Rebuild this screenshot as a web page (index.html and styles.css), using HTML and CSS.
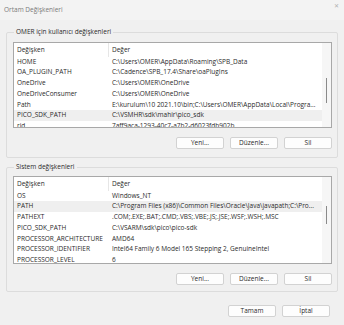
FILE: index.html
```html
<!DOCTYPE html>
<html lang="tr">
<head>
    <meta charset="UTF-8">
    <meta name="viewport" content="width=device-width, initial-scale=1.0">
    <title>Ortam Değişkenleri</title>
    <link rel="stylesheet" href="styles.css">
</head>
<body>
    <div class="window">
        <div class="titlebar">
            <span class="title">Ortam Değişkenleri</span>
            <span class="close">&#x2715;</span>
        </div>
        <div class="content">
            <!-- Kullanıcı değişkenleri -->
            <fieldset class="group group-user">
                <legend>OMER için kullanıcı değişkenleri</legend>
                <div class="list list-user">
                    <div class="rows">
                        <div class="row head">
                            <div class="name">Değişken</div>
                            <div class="value">Değer</div>
                        </div>
                        <div class="row"><div class="name">HOME</div><div class="value">C:\Users\OMER\AppData\Roaming\SPB_Data</div></div>
                        <div class="row"><div class="name">OA_PLUGIN_PATH</div><div class="value">C:\Cadence\SPB_17.4\Share\oaPlugIns</div></div>
                        <div class="row"><div class="name">OneDrive</div><div class="value">C:\Users\OMER\OneDrive</div></div>
                        <div class="row"><div class="name">OneDriveConsumer</div><div class="value">C:\Users\OMER\OneDrive</div></div>
                        <div class="row"><div class="name">Path</div><div class="value">E:\kurulum\10 2021.10\bin;C:\Users\OMER\AppData\Local\Progra...</div></div>
                        <div class="row selected"><div class="name">PICO_SDK_PATH</div><div class="value">C:\VSMHR\sdk\mahir\pico_sdk</div></div>
                        <div class="row"><div class="name">rid</div><div class="value">7aff9aca-1293-40c7-a7b2-d6023fdb902b</div></div>
                    </div>
                    <div class="scrollbar"><div class="thumb"></div></div>
                </div>
                <div class="actions">
                    <button>Yeni...</button>
                    <button>Düzenle...</button>
                    <button>Sil</button>
                </div>
            </fieldset>

            <!-- Sistem değişkenleri -->
            <fieldset class="group group-system">
                <legend>Sistem değişkenleri</legend>
                <div class="list list-system">
                    <div class="rows">
                        <div class="row head">
                            <div class="name">Değişken</div>
                            <div class="value">Değer</div>
                        </div>
                        <div class="row"><div class="name">OS</div><div class="value">Windows_NT</div></div>
                        <div class="row selected"><div class="name">PATH</div><div class="value">C:\Program Files (x86)\Common Files\Oracle\Java\javapath;C:\Pro...</div></div>
                        <div class="row"><div class="name">PATHEXT</div><div class="value">.COM;.EXE;.BAT;.CMD;.VBS;.VBE;.JS;.JSE;.WSF;.WSH;.MSC</div></div>
                        <div class="row"><div class="name">PICO_SDK_PATH</div><div class="value">C:\VSARM\sdk\pico\pico-sdk</div></div>
                        <div class="row"><div class="name">PROCESSOR_ARCHITECTURE</div><div class="value">AMD64</div></div>
                        <div class="row"><div class="name">PROCESSOR_IDENTIFIER</div><div class="value">Intel64 Family 6 Model 165 Stepping 2, GenuineIntel</div></div>
                        <div class="row"><div class="name">PROCESSOR_LEVEL</div><div class="value">6</div></div>
                    </div>
                    <div class="scrollbar"><div class="thumb"></div></div>
                </div>
                <div class="actions">
                    <button>Yeni...</button>
                    <button>Düzenle...</button>
                    <button>Sil</button>
                </div>
            </fieldset>

            <div class="footer">
                <button>Tamam</button>
                <button>İptal</button>
            </div>
        </div>
    </div>
</body>
</html>
```

FILE: styles.css
```css
    body {
        margin: 0;
        padding: 0;
        background-color: #f0f0f0;
        font-family: "Open Sans", "Noto Sans", sans-serif;
        font-size: 6.5px;
        color: #2a2a2a;
    }

    .window {
        width: 344px;
        height: 325px;
        overflow: hidden;
    }

    .titlebar {
        height: 20px;
        display: flex;
        align-items: center;
        justify-content: space-between;
        padding: 0 4px 0 4px;
        background-color: #f3f3f3;
    }

    .title {
        color: #7a7a7a;
        font-size: 6.5px;
        margin-top: -1px;
    }

    .close {
        color: #b0b0b0;
        font-size: 6px;
        margin-top: -8px;
        margin-right: 1px;
    }

    .content {
        padding: 7px 6px 0 6px;
    }

    .group {
        margin: 0;
        padding: 0 5px 0 6px;
        border: 1px solid #dcdcdc;
        border-radius: 2px;
    }

    .group legend {
        padding: 0 2px;
        margin-left: 1px;
        line-height: 10px;
        height: 10px;
    }

    .group-user {
        padding-top: 5px;
        padding-bottom: 8px;
    }

    .group-system {
        margin-top: 4px;
        padding-top: 4px;
        padding-bottom: 6px;
    }

    .list {
        display: flex;
        background-color: #fff;
        border: 1px solid #a8a8a8;
        overflow: hidden;
    }

    .list-user {
        height: 84px;
    }

    .list-system {
        height: 86px;
    }

    .rows {
        flex: 1;
        min-width: 0;
    }

    .row {
        display: flex;
        height: 10.8px;
        line-height: 10.8px;
        white-space: nowrap;
    }

    .row.head {
        height: 13.5px;
        line-height: 13px;
    }

    .row.selected {
        background-color: #efefef;
    }

    .name {
        width: 91px;
        padding-left: 3px;
        flex-shrink: 0;
    }

    .head .name {
        border-right: 1px solid #e6e6e6;
    }

    .value {
        padding-left: 4px;
        overflow: hidden;
        flex: 1;
        min-width: 0;
    }

    .head .value {
        padding-left: 3px;
    }

    .scrollbar {
        width: 9px;
        flex-shrink: 0;
        background-color: #f6f6f6;
        display: flex;
        flex-direction: column;
        align-items: center;
    }

    .thumb {
        width: 1px;
        background-color: #8a8a8a;
    }

    .list-user .thumb {
        margin-top: 35px;
        height: 25px;
    }

    .list-system .thumb {
        margin-top: 29px;
        height: 18px;
    }

    .actions {
        display: flex;
        justify-content: flex-end;
        gap: 6px;
        margin-top: 9px;
    }

    .footer {
        display: flex;
        justify-content: flex-end;
        gap: 6px;
        margin-top: 13px;
        padding-right: 8px;
    }

    button {
        width: 48px;
        height: 12px;
        padding: 0;
        font-family: inherit;
        font-size: 6.5px;
        color: #2a2a2a;
        background-color: #fdfdfd;
        border: 1px solid #d2d2d2;
        border-radius: 2px;
        line-height: 10px;
    }
```
